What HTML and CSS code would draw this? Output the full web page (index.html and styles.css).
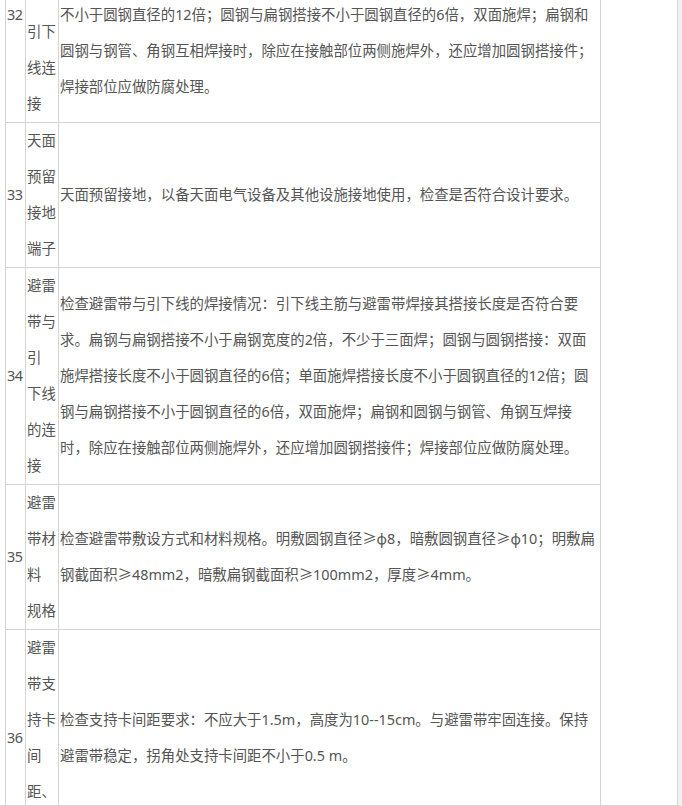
FILE: index.html
```html
<!DOCTYPE html>
<html lang="zh-CN">
<head>
    <meta charset="UTF-8">
    <meta name="viewport" content="width=device-width, initial-scale=1.0">
    <title>防雷检查项目</title>
    <link rel="stylesheet" href="styles.css">
</head>

<body>
<div class="frame">
  <table class="check-table">
    <colgroup>
      <col class="col-num">
      <col class="col-name">
      <col class="col-desc">
      <col class="col-note">
    </colgroup>
    <tr class="row-first">
      <td class="num">32</td>
      <td class="name name-shifted">引下线连接</td>
      <td class="desc">不小于圆钢直径的12倍；圆钢与扁钢搭接不小于圆钢直径的6倍，双面施焊；扁钢和圆钢与钢管、角钢互相焊接时，除应在接触部位两侧施焊外，还应增加圆钢搭接件；焊接部位应做防腐处理。</td>
      <td class="note" rowspan="5"></td>
    </tr>
    <tr>
      <td class="num">33</td>
      <td class="name">天面预留接地端子</td>
      <td class="desc">天面预留接地，以备天面电气设备及其他设施接地使用，检查是否符合设计要求。</td>
    </tr>
    <tr>
      <td class="num">34</td>
      <td class="name">避雷带与引 下线的连接</td>
      <td class="desc">检查避雷带与引下线的焊接情况：引下线主筋与避雷带焊接其搭接长度是否符合要求。扁钢与扁钢搭接不小于扁钢宽度的2倍，不少于三面焊；圆钢与圆钢搭接：双面施焊搭接长度不小于圆钢直径的6倍；单面施焊搭接长度不小于圆钢直径的12倍；圆钢与扁钢搭接不小于圆钢直径的6倍，双面施焊；扁钢和圆钢与钢管、角钢互焊接时，除应在接触部位两侧施焊外，还应增加圆钢搭接件；焊接部位应做防腐处理。</td>
    </tr>
    <tr>
      <td class="num">35</td>
      <td class="name">避雷带材料 规格</td>
      <td class="desc">检查避雷带敷设方式和材料规格。明敷圆钢直径≥φ8，暗敷圆钢直径≥φ10；明敷扁钢截面积≥48mm2，暗敷扁钢截面积≥100mm2，厚度≥4mm。</td>
    </tr>
    <tr>
      <td class="num">36</td>
      <td class="name name-long">避雷带支持卡间距、</td>
      <td class="desc">检查支持卡间距要求：不应大于1.5m，高度为10--15cm。与避雷带牢固连接。保持避雷带稳定，拐角处支持卡间距不小于0.5 m。</td>
    </tr>
  </table>
</div>
</body>
</html>
```

FILE: styles.css
```css
body {
  margin: 0;
  background: #fff;
}

/* окно просмотра таблицы, низ обрезан рамкой */
.frame {
  width: 678px;
  height: 805px;
  overflow: hidden;
  border-bottom: 1px solid #d4d4d4;
  border-right: 4px solid #f1f1f1;
}

.check-table {
  margin: -4px 0 0 5px;
  width: 673px;
  table-layout: fixed;
  border-collapse: collapse;
  font-family: "Noto Sans", "Noto Sans CJK SC", sans-serif;
  font-size: 14.4px;
  line-height: 36px;
  color: #555;
}

.col-num { width: 20px; }
.col-name { width: 33px; }
.col-desc { width: 542px; }
.col-note { width: 77px; }

.check-table td {
  border: 1px solid #d4d4d4;
  padding: 0 1px;
  vertical-align: middle;
  word-break: break-all;
}

.num {
  padding-left: 2px;
  letter-spacing: -0.5px;
}

.check-table .desc {
  padding-right: 5px;
}

.row-first td {
  vertical-align: top;
}

.name-shifted {
  padding-top: 17px !important;
}

.name-long {
  padding-bottom: 36px !important;
}

.note {
  vertical-align: top;
}
```
